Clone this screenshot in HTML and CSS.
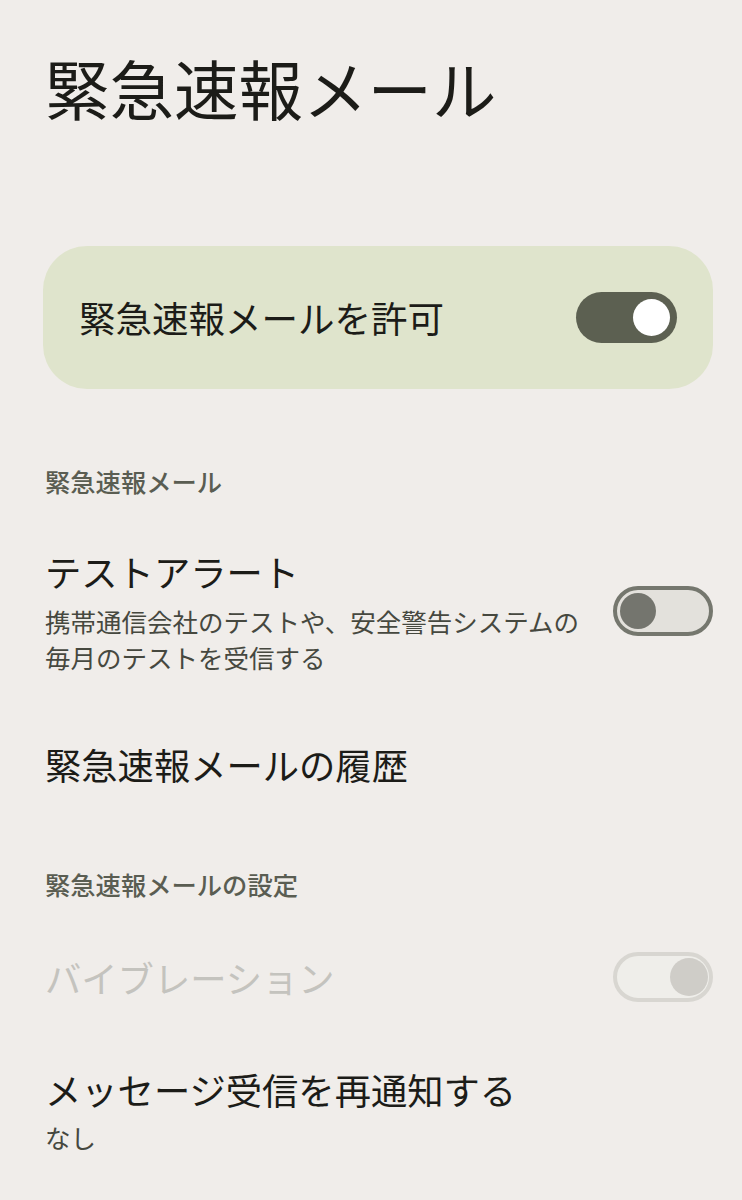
FILE: index.html
```html
<!DOCTYPE html>
<html lang="ja">
<head>
  <meta charset="UTF-8">
  <meta name="viewport" content="width=device-width, initial-scale=1">
  <title>緊急速報メール</title>
  <link rel="stylesheet" href="styles.css">
</head>
<body>

<main class="page">
  <h1 class="page-title">緊急速報メール</h1>

  <div class="main-switch">
    <span class="main-switch-label">緊急速報メールを許可</span>
    <span class="toggle toggle-on"><span class="thumb"></span></span>
  </div>

  <h2 class="section-label first">緊急速報メール</h2>

  <div class="row row-test">
    <div class="row-text">
      <div class="row-title">テストアラート</div>
      <div class="row-summary">携帯通信会社のテストや、安全警告システムの毎月のテストを受信する</div>
    </div>
    <span class="toggle toggle-off"><span class="thumb"></span></span>
  </div>

  <div class="row row-history">
    <div class="row-text">
      <div class="row-title">緊急速報メールの履歴</div>
    </div>
  </div>

  <h2 class="section-label second">緊急速報メールの設定</h2>

  <div class="row row-vibrate disabled">
    <div class="row-text">
      <div class="row-title">バイブレーション</div>
    </div>
    <span class="toggle toggle-disabled"><span class="thumb"></span></span>
  </div>

  <div class="row row-repeat">
    <div class="row-text">
      <div class="row-title">メッセージ受信を再通知する</div>
      <div class="row-summary">なし</div>
    </div>
  </div>
</main>

</body>
</html>
```

FILE: styles.css
```css
body {
  margin: 0;
  background: #f0edea;
  font-family: "Noto Sans CJK JP", "Noto Sans", sans-serif;
  color: #1c1c18;
}
.page {
  padding: 0 29px 40px 43px;
}

.page-title {
  margin: 0;
  padding-top: 47px;
  font-size: 64.5px;
  font-weight: 400;
  line-height: 80px;
  padding-left: 2px;
}

.main-switch {
  margin-top: 119px;
  height: 143px;
  border-radius: 44px;
  background: #dfe4cc;
  display: flex;
  align-items: center;
  justify-content: space-between;
  padding: 0 36px 0 36px;
}
.main-switch-label {
  font-size: 36.5px;
  line-height: 48px;
}

.section-label {
  margin: 0;
  font-size: 25.3px;
  font-weight: 500;
  line-height: 36px;
  color: #5a5d52;
  padding-left: 2px;
}
.section-label.first {
  margin-top: 74px;
}
.section-label.second {
  margin-top: 78px;
}

.row {
  display: flex;
  align-items: center;
  gap: 24px;
  padding-left: 2px;
}
.row-text {
  flex: 1;
}
.row-title {
  font-size: 36.3px;
  line-height: 48px;
}
.row-summary {
  margin-top: 8px;
  font-size: 25.5px;
  line-height: 36px;
  color: #46483f;
}
.row-test {
  margin-top: 48px;
}
.row-history {
  margin-top: 65px;
}
.row-vibrate {
  margin-top: 50px;
}
.row-repeat {
  margin-top: 63px;
}
.row-repeat .row-summary {
  margin-top: 6px;
}
.disabled .row-title {
  color: #c4c3be;
}

/* switches */
.toggle {
  box-sizing: border-box;
  flex: none;
  width: 101px;
  height: 51px;
  border-radius: 26px;
  display: flex;
  align-items: center;
  padding: 0 7px;
}
.thumb {
  width: 37px;
  height: 37px;
  border-radius: 50%;
}
.toggle-on {
  background: #5c6051;
  justify-content: flex-end;
}
.toggle-on .thumb {
  background: #ffffff;
}
.toggle-off {
  width: 100px;
  height: 50px;
  border: 4px solid #75776e;
  background: #e3e1dc;
  padding: 0 3px;
}
.toggle-off .thumb {
  width: 36px;
  height: 36px;
  background: #74756e;
}
.toggle-disabled {
  width: 100px;
  height: 50px;
  border: 4px solid #d8d6d1;
  background: #efeeea;
  justify-content: flex-end;
  padding: 0 1px;
}
.toggle-disabled .thumb {
  width: 38px;
  height: 38px;
  background: #cfcdc8;
}
```
